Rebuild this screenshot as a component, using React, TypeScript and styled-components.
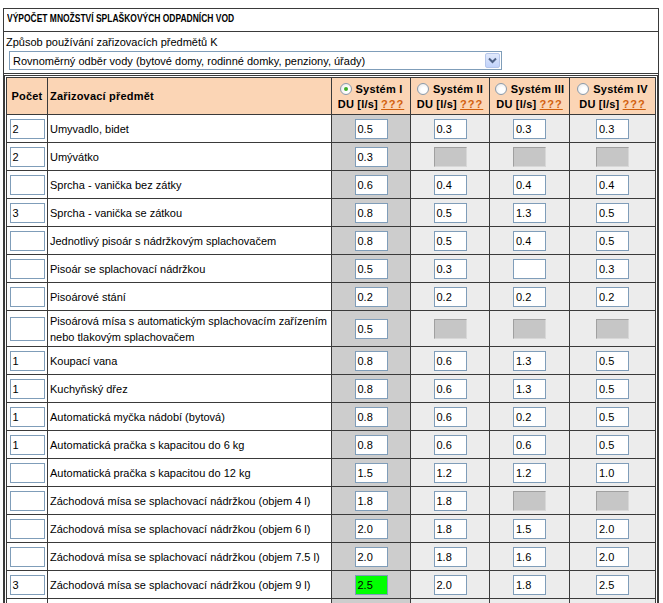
import styled, { createGlobalStyle, css } from "styled-components";

interface Fixture {
  count: string;
  name: string;
  values: (string | null)[];
  highlight?: boolean;
}

const fixtures: Fixture[] = [
  { count: "2", name: "Umyvadlo, bidet", values: ["0.5", "0.3", "0.3", "0.3"] },
  { count: "2", name: "Umývátko", values: ["0.3", null, null, null] },
  { count: "", name: "Sprcha - vanička bez zátky", values: ["0.6", "0.4", "0.4", "0.4"] },
  { count: "3", name: "Sprcha - vanička se zátkou", values: ["0.8", "0.5", "1.3", "0.5"] },
  { count: "", name: "Jednotlivý pisoár s nádržkovým splachovačem", values: ["0.8", "0.5", "0.4", "0.5"] },
  { count: "", name: "Pisoár se splachovací nádržkou", values: ["0.5", "0.3", "", "0.3"] },
  { count: "", name: "Pisoárové stání", values: ["0.2", "0.2", "0.2", "0.2"] },
  {
    count: "",
    name: "Pisoárová mísa s automatickým splachovacím zařízením nebo tlakovým splachovačem",
    values: ["0.5", null, null, null],
  },
  { count: "1", name: "Koupací vana", values: ["0.8", "0.6", "1.3", "0.5"] },
  { count: "1", name: "Kuchyňský dřez", values: ["0.8", "0.6", "1.3", "0.5"] },
  { count: "1", name: "Automatická myčka nádobí (bytová)", values: ["0.8", "0.6", "0.2", "0.5"] },
  { count: "1", name: "Automatická pračka s kapacitou do 6 kg", values: ["0.8", "0.6", "0.6", "0.5"] },
  { count: "", name: "Automatická pračka s kapacitou do 12 kg", values: ["1.5", "1.2", "1.2", "1.0"] },
  { count: "", name: "Záchodová mísa se splachovací nádržkou (objem 4 l)", values: ["1.8", "1.8", null, null] },
  { count: "", name: "Záchodová mísa se splachovací nádržkou (objem 6 l)", values: ["2.0", "1.8", "1.5", "2.0"] },
  { count: "", name: "Záchodová mísa se splachovací nádržkou (objem 7.5 l)", values: ["2.0", "1.8", "1.6", "2.0"] },
  {
    count: "3",
    name: "Záchodová mísa se splachovací nádržkou (objem 9 l)",
    values: ["2.5", "2.0", "1.8", "2.5"],
    highlight: true,
  },
];

const systems = ["Systém I", "Systém II", "Systém III", "Systém IV"];

export default function App() {
  return (
    <>
      <GlobalStyle />
      <Panel>
        <TitleRow>
          <TitleText>VÝPOČET MNOŽSTVÍ SPLAŠKOVÝCH ODPADNÍCH VOD</TitleText>
        </TitleRow>
        <UsageRow>
          <UsageLabel>Způsob používání zařizovacích předmětů K</UsageLabel>
          <SelectBox>
            <SelectText>Rovnoměrný odběr vody (bytové domy, rodinné domky, penziony, úřady)</SelectText>
            <SelectButton>
              <svg width="9" height="7" viewBox="0 0 9 7">
                <path d="M1 1.5 L4.5 5 L8 1.5" fill="none" stroke="#4d6185" strokeWidth="2" />
              </svg>
            </SelectButton>
          </SelectBox>
        </UsageRow>
        <TableWrap>
          <Table>
            <colgroup>
              <col style={{ width: 41 }} />
              <col style={{ width: 284 }} />
              <col style={{ width: 79 }} />
              <col style={{ width: 79 }} />
              <col style={{ width: 80 }} />
              <col style={{ width: 86 }} />
            </colgroup>
            <thead>
              <tr>
                <HeadCell $align="center">Počet</HeadCell>
                <HeadCell $align="left">Zařizovací předmět</HeadCell>
                {systems.map((s, i) => (
                  <HeadCell key={s} $align="center">
                    <SystemLine>
                      <Radio $checked={i === 0} />
                      {s}
                    </SystemLine>
                    <UnitLine>
                      DU [l/s] <HelpLink>???</HelpLink>
                    </UnitLine>
                  </HeadCell>
                ))}
              </tr>
            </thead>
            <tbody>
              {fixtures.map((f) => {
                const tall = f.name.length > 60;
                return (
                  <tr key={f.name}>
                    <CountCell $tall={tall}>
                      <CountInput $tall={tall}>{f.count}</CountInput>
                    </CountCell>
                    <NameCell>{f.name}</NameCell>
                    {f.values.map((v, i) => (
                      <ValueCell key={i} $primary={i === 0}>
                        {v === null ? (
                          <DisabledInput />
                        ) : (
                          <ValueInput $green={i === 0 && !!f.highlight}>{v}</ValueInput>
                        )}
                      </ValueCell>
                    ))}
                  </tr>
                );
              })}
              <tr>
                <CountCell $tall={false} />
                <NameCell />
                {systems.map((s, i) => (
                  <ValueCell key={s} $primary={i === 0} />
                ))}
              </tr>
            </tbody>
          </Table>
        </TableWrap>
      </Panel>
    </>
  );
}

const GlobalStyle = createGlobalStyle`
  body {
    margin: 0;
    background: #ffffff;
    font-family: "Liberation Sans", Arial, sans-serif;
    font-size: 11px;
    color: #000000;
  }
`;

const Panel = styled.div`
  box-sizing: border-box;
  width: 656px;
  margin: 8px 0 0 3px;
  border: 1px solid #3a3a3a;
`;

const TitleRow = styled.div`
  height: 22px;
  padding-left: 3px;
  border-bottom: 1px solid #3a3a3a;
`;

const TitleText = styled.span`
  display: inline-block;
  line-height: 18px;
  font-size: 11px;
  font-weight: bold;
  white-space: nowrap;
  transform: scaleX(0.77);
  transform-origin: left center;
`;

const UsageRow = styled.div`
  display: flex;
  flex-direction: column;
  align-items: flex-start;
  gap: 2px;
  height: 42px;
  box-sizing: border-box;
  padding: 3px 0 0 2px;
  border-bottom: 1px solid #3a3a3a;
`;

const UsageLabel = styled.div`
  line-height: 14px;
`;

const SelectBox = styled.div`
  display: flex;
  align-items: center;
  box-sizing: border-box;
  width: 493px;
  height: 19px;
  margin-left: 3px;
  border: 1px solid #7f9db9;
  background: #ffffff;
`;

const SelectText = styled.span`
  flex: 1;
  padding-left: 3px;
  white-space: nowrap;
`;

const SelectButton = styled.span`
  display: flex;
  align-items: center;
  justify-content: center;
  box-sizing: border-box;
  width: 15px;
  height: 15px;
  margin-right: 1px;
  border: 1px solid #b5c6ea;
  border-radius: 2px;
  background: linear-gradient(#e1e9fb, #c1d3fb);
`;

const TableWrap = styled.div`
  padding: 1px;
`;

const Table = styled.table`
  width: 650px;
  table-layout: fixed;
  border-collapse: collapse;
  border: 1px solid #3a3a3a;
  outline: 1px solid #3a3a3a;
  outline-offset: 1px;
  margin: 2px 0 0 1px;
`;

const cellBase = css`
  border: 1px solid #3a3a3a;
  padding: 0;
`;

const HeadCell = styled.th<{ $align: "left" | "center" }>`
  ${cellBase};
  height: 36px;
  background: #fbd5b5;
  text-align: ${({ $align }) => $align};
  padding-left: ${({ $align }) => ($align === "left" ? "2px" : "0")};
  font-weight: bold;
  letter-spacing: 0.2px;
  white-space: nowrap;
`;

const SystemLine = styled.div`
  display: flex;
  align-items: center;
  justify-content: center;
  gap: 4px;
  line-height: 15px;
  padding-top: 1px;
`;

const UnitLine = styled.div`
  line-height: 15px;
`;

const HelpLink = styled.span`
  color: #d2600c;
  text-decoration: underline;
  letter-spacing: 1px;
`;

const Radio = styled.span<{ $checked: boolean }>`
  position: relative;
  box-sizing: border-box;
  width: 12px;
  height: 12px;
  border-radius: 50%;
  border: 1px solid #8b9aa9;
  background: radial-gradient(circle at 60% 60%, #ffffff 30%, #e3e3e3 100%);

  ${({ $checked }) =>
    $checked &&
    css`
      &::after {
        content: "";
        position: absolute;
        left: 3px;
        top: 3px;
        width: 4px;
        height: 4px;
        border-radius: 50%;
        background: #3fae2a;
      }
    `}
`;

const CountCell = styled.td<{ $tall: boolean }>`
  ${cellBase};
  height: ${({ $tall }) => ($tall ? "35px" : "27px")};
  text-align: center;
  background: #ffffff;
`;

const inputBase = css`
  display: inline-flex;
  align-items: center;
  box-sizing: border-box;
  height: 20px;
  padding-left: 2px;
  border: 1px solid #7f9db9;
  background: #ffffff;
  vertical-align: middle;
`;

const CountInput = styled.span<{ $tall: boolean }>`
  ${inputBase};
  width: 35px;
  height: ${({ $tall }) => ($tall ? "24px" : "20px")};
`;

const NameCell = styled.td`
  ${cellBase};
  padding-left: 2px;
  line-height: 16px;
  background: #ffffff;
`;

const ValueCell = styled.td<{ $primary: boolean }>`
  ${cellBase};
  text-align: center;
  background: ${({ $primary }) => ($primary ? "#cdcdcd" : "#ececec")};
`;

const ValueInput = styled.span<{ $green: boolean }>`
  ${inputBase};
  width: 33px;
  background: ${({ $green }) => ($green ? "#00ff00" : "#ffffff")};
`;

const DisabledInput = styled.span`
  ${inputBase};
  width: 33px;
  border-color: #a0a0a0 #d8d8d8 #d8d8d8 #a0a0a0;
  background: #c6c6c6;
`;
